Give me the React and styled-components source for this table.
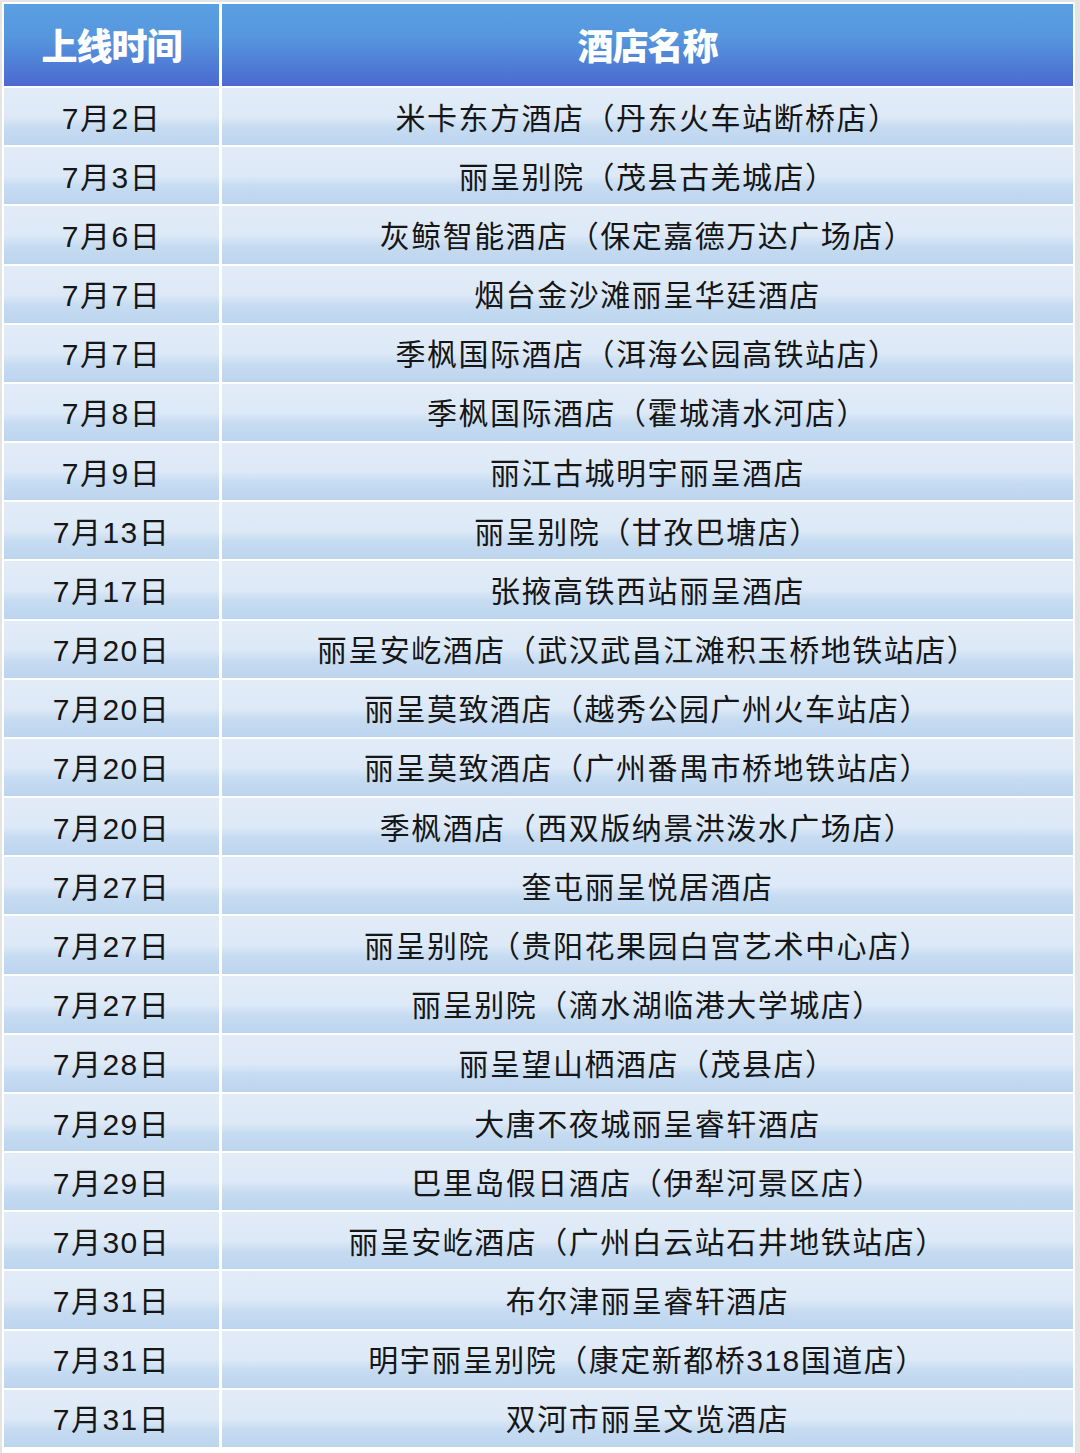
import React from "react";
import styled, { createGlobalStyle } from "styled-components";

const GlobalStyle = createGlobalStyle`
  html, body { margin: 0; padding: 0; background: #e4e4e4; }
  body { font-family: "Liberation Sans", "Noto Sans CJK SC", sans-serif; }
  * { box-sizing: border-box; }
`;

const Sheet = styled.div`
  margin: 2px 0 0 2px;
  width: 1073px;
  height: 1451px;
  padding: 2px;
  background: #ffffff;
`;

const Table = styled.div`
  display: grid;
  grid-template-columns: 215px 851px;
  grid-template-rows: 82px repeat(23, 1fr);
  column-gap: 3px;
  row-gap: 2px;
  height: 1443px;
`;

const HeadCell = styled.div`
  display: flex;
  align-items: center;
  justify-content: center;
  background: linear-gradient(180deg, #5aa0e2 0%, #5697de 40%, #4c69d0 100%);
  color: #ffffff;
  font-family: "Noto Sans CJK SC", sans-serif;
  font-size: 36px;
  font-weight: 900;
  letter-spacing: -1px;
  padding-bottom: 3px;
`;

const Cell = styled.div`
  display: flex;
  align-items: center;
  justify-content: center;
  background: linear-gradient(
    180deg,
    #e2ecf8 0%,
    #dde9f7 50%,
    #c5dbf1 70%,
    #bcd5ee 100%
  );
  color: #161616;
  font-size: 30px;
  font-weight: 400;
  letter-spacing: 1.5px;
  white-space: nowrap;
  padding-bottom: 2px;
`;

const rows = [
  ["7月2日", "米卡东方酒店（丹东火车站断桥店）"],
  ["7月3日", "丽呈别院（茂县古羌城店）"],
  ["7月6日", "灰鲸智能酒店（保定嘉德万达广场店）"],
  ["7月7日", "烟台金沙滩丽呈华廷酒店"],
  ["7月7日", "季枫国际酒店（洱海公园高铁站店）"],
  ["7月8日", "季枫国际酒店（霍城清水河店）"],
  ["7月9日", "丽江古城明宇丽呈酒店"],
  ["7月13日", "丽呈别院（甘孜巴塘店）"],
  ["7月17日", "张掖高铁西站丽呈酒店"],
  ["7月20日", "丽呈安屹酒店（武汉武昌江滩积玉桥地铁站店）"],
  ["7月20日", "丽呈莫致酒店（越秀公园广州火车站店）"],
  ["7月20日", "丽呈莫致酒店（广州番禺市桥地铁站店）"],
  ["7月20日", "季枫酒店（西双版纳景洪泼水广场店）"],
  ["7月27日", "奎屯丽呈悦居酒店"],
  ["7月27日", "丽呈别院（贵阳花果园白宫艺术中心店）"],
  ["7月27日", "丽呈别院（滴水湖临港大学城店）"],
  ["7月28日", "丽呈望山栖酒店（茂县店）"],
  ["7月29日", "大唐不夜城丽呈睿轩酒店"],
  ["7月29日", "巴里岛假日酒店（伊犁河景区店）"],
  ["7月30日", "丽呈安屹酒店（广州白云站石井地铁站店）"],
  ["7月31日", "布尔津丽呈睿轩酒店"],
  ["7月31日", "明宇丽呈别院（康定新都桥318国道店）"],
  ["7月31日", "双河市丽呈文览酒店"],
];

export default function App() {
  return (
    <>
      <GlobalStyle />
      <Sheet>
        <Table>
          <HeadCell>上线时间</HeadCell>
          <HeadCell>酒店名称</HeadCell>
          {rows.map(([date, name], i) => (
            <React.Fragment key={i}>
              <Cell>{date}</Cell>
              <Cell>{name}</Cell>
            </React.Fragment>
          ))}
        </Table>
      </Sheet>
    </>
  );
}
